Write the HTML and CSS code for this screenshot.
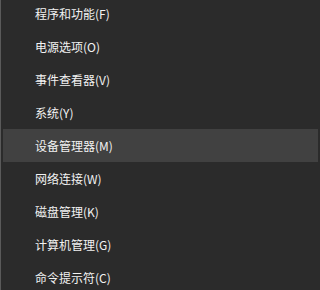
FILE: index.html
```html
<!DOCTYPE html>
<html lang="zh-CN">
<head>
<meta charset="utf-8">
<link rel="stylesheet" href="styles.css">
</head>
<body>
<ul class="menu">
  <li class="item">程序和功能(F)</li>
  <li class="item">电源选项(O)</li>
  <li class="item">事件查看器(V)</li>
  <li class="item">系统(Y)</li>
  <li class="item active">设备管理器(M)</li>
  <li class="item">网络连接(W)</li>
  <li class="item">磁盘管理(K)</li>
  <li class="item">计算机管理(G)</li>
  <li class="item">命令提示符(C)</li>
</ul>
</body>
</html>
```
FILE: styles.css
```css
html, body {
  margin: 0;
  padding: 0;
  height: 100%;
  background: #2b2b2b;
  overflow: hidden;
}
body {
  border-left: 1px solid #5a5a5a;
  box-sizing: border-box;
  font-family: "Noto Sans CJK SC", "Noto Sans", sans-serif;
  font-size: 12px;
  color: #f2f2f2;
}
.menu {
  list-style: none;
  margin: -3px 2px 0 2px;
  padding: 0;
  display: flex;
  flex-direction: column;
}
.item {
  height: 33px;
  display: flex;
  align-items: center;
  padding-left: 32px;
  white-space: nowrap;
}
.item.active {
  background: #414141;
}
```
